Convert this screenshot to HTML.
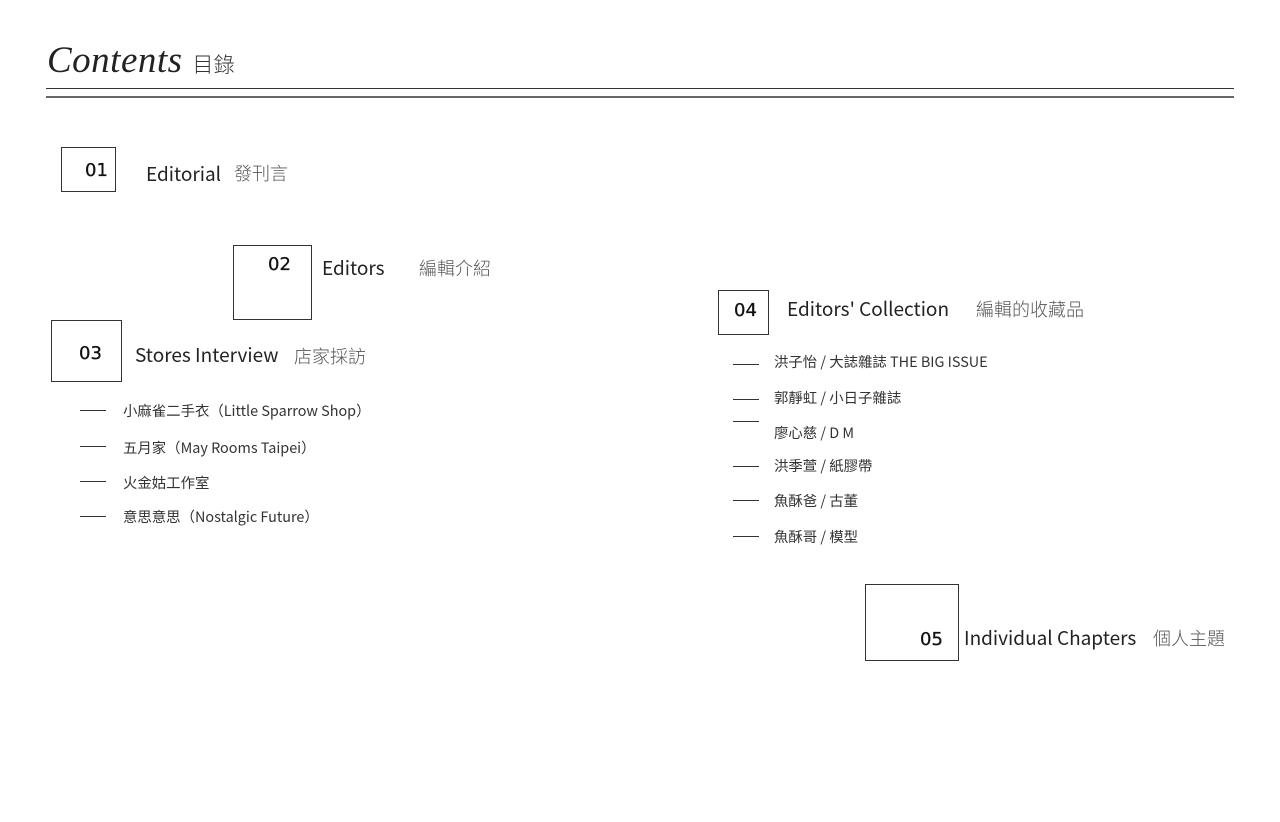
<!DOCTYPE html>
<html><head><meta charset="utf-8">
<style>
html,body{margin:0;padding:0;background:#fff;}
body{width:1280px;height:822px;position:relative;overflow:hidden;font-family:"Noto Sans CJK TC","Liberation Sans",sans-serif;color:#222;}
.a{position:absolute;white-space:nowrap;line-height:1;}
.box{position:absolute;border:1px solid #333;box-sizing:border-box;}
.num{position:absolute;font-family:"DejaVu Sans","Liberation Sans",sans-serif;font-size:18px;color:#111;line-height:1;-webkit-text-stroke:0.3px #111;}
.en{font-size:19px;color:#222;}
.zh{font-size:18px;color:#555;font-weight:300;}
.item{position:absolute;font-size:14.4px;color:#333;white-space:nowrap;line-height:1;}
.dash{position:absolute;height:1px;background:#333;width:26px;}
</style></head><body>
<div class="a" style="left:47px;top:42px;font-family:'Liberation Serif',serif;font-style:italic;font-size:37px;color:#222;letter-spacing:0.5px;">Contents <span style="font-style:normal;font-family:'Noto Sans CJK TC',sans-serif;font-size:21px;color:#333;font-weight:300;">目錄</span></div>
<div class="a" style="left:46px;top:88px;width:1188px;height:1px;background:#333;"></div>
<div class="a" style="left:46px;top:96px;width:1188px;height:2px;background:#666;"></div>

<div class="box" style="left:61px;top:147px;width:55px;height:45px;"></div>
<div class="num" style="left:85px;top:162px;">01</div>
<div class="a en" style="left:146px;top:164px;">Editorial</div>
<div class="a zh" style="left:234px;top:164px;">發刊言</div>

<div class="box" style="left:233px;top:245px;width:79px;height:75px;"></div>
<div class="num" style="left:268px;top:256px;">02</div>
<div class="a en" style="left:322px;top:258px;">Editors</div>
<div class="a zh" style="left:419px;top:259px;">編輯介紹</div>

<div class="box" style="left:51px;top:320px;width:71px;height:62px;"></div>
<div class="num" style="left:79px;top:345px;">03</div>
<div class="a en" style="left:135px;top:345px;">Stores Interview</div>
<div class="a zh" style="left:294px;top:347px;">店家採訪</div>

<div class="dash" style="left:80px;top:410px;"></div><div class="item" style="left:123px;top:404px;">小麻雀二手衣（Little Sparrow Shop）</div>
<div class="dash" style="left:80px;top:446px;"></div><div class="item" style="left:123px;top:441px;">五月家（May Rooms Taipei）</div>
<div class="dash" style="left:80px;top:481px;"></div><div class="item" style="left:123px;top:476px;">火金姑工作室</div>
<div class="dash" style="left:80px;top:516px;"></div><div class="item" style="left:123px;top:510px;">意思意思（Nostalgic Future）</div>

<div class="box" style="left:718px;top:290px;width:51px;height:45px;"></div>
<div class="num" style="left:734px;top:302px;">04</div>
<div class="a en" style="left:787px;top:299px;">Editors' Collection</div>
<div class="a zh" style="left:976px;top:300px;">編輯的收藏品</div>

<div class="dash" style="left:733px;top:364px;"></div><div class="item" style="left:774px;top:355px;">洪子怡 / 大誌雜誌 THE BIG ISSUE</div>
<div class="dash" style="left:733px;top:399px;"></div><div class="item" style="left:774px;top:391px;">郭靜虹 / 小日子雜誌</div>
<div class="dash" style="left:733px;top:421px;"></div><div class="item" style="left:774px;top:426px;">廖心慈 / D M</div>
<div class="dash" style="left:733px;top:466px;"></div><div class="item" style="left:774px;top:459px;">洪季萱 / 紙膠帶</div>
<div class="dash" style="left:733px;top:500px;"></div><div class="item" style="left:774px;top:494px;">魚酥爸 / 古董</div>
<div class="dash" style="left:733px;top:536px;"></div><div class="item" style="left:774px;top:530px;">魚酥哥 / 模型</div>

<div class="box" style="left:865px;top:584px;width:94px;height:77px;"></div>
<div class="num" style="left:920px;top:631px;">05</div>
<div class="a en" style="left:964px;top:628px;">Individual Chapters</div>
<div class="a zh" style="left:1153px;top:629px;">個人主題</div>
</body></html>
